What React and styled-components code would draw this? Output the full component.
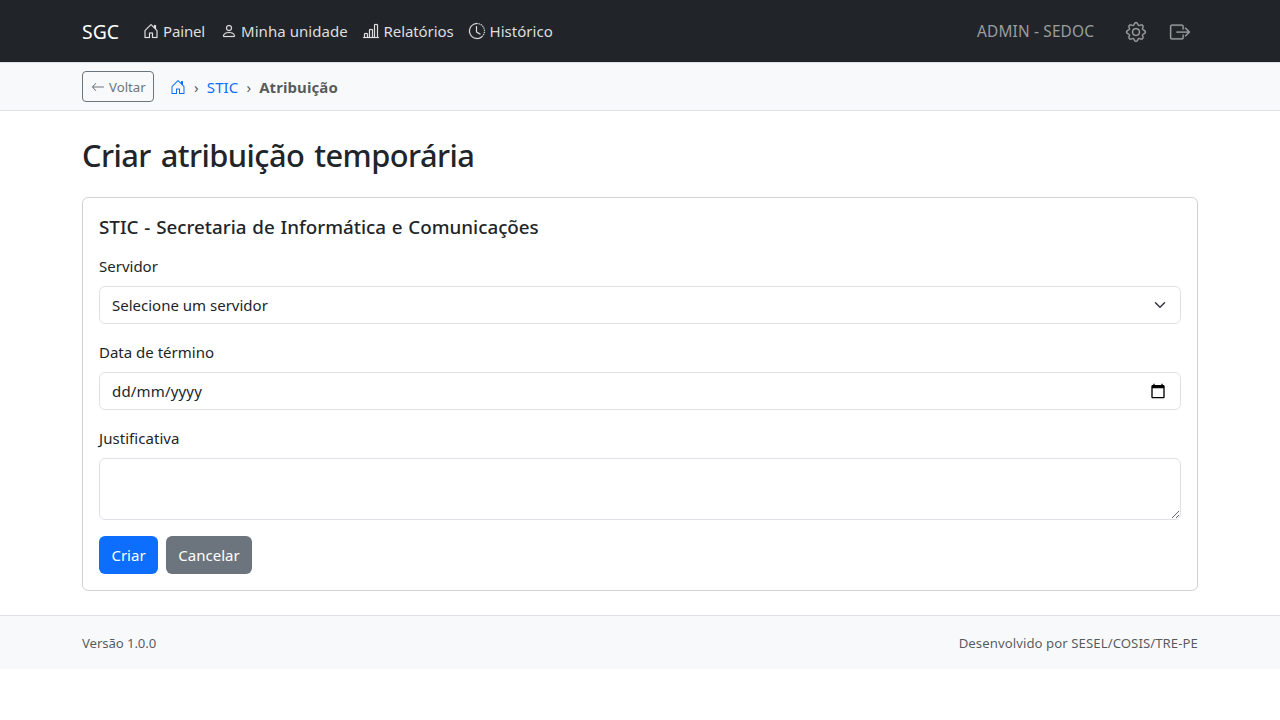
import React from "react";
import styled, { createGlobalStyle, css } from "styled-components";
import {
  BsHouseDoor, BsPerson, BsBarChartLine, BsClockHistory, BsGear, BsBoxArrowRight, BsArrowLeft,
} from "react-icons/bs";

const GlobalStyle = createGlobalStyle`
  *, *::before, *::after { box-sizing: border-box; }
  body {
    margin: 0;
    background: #fff;
    color: #212529;
    font-family: "Noto Sans", "Open Sans", sans-serif;
    font-size: 15px;
    line-height: 24px;
  }
  h2, h5, p { margin: 0; }
  input, select, textarea, button { font: inherit; color: inherit; }
  svg { display: block; flex: none; }
`;

const Container = styled.div`
  width: 1116px;
  margin: 0 auto;
  display: flex;
  align-items: center;
  justify-content: space-between;
`;

const Text = styled.span`
  white-space: nowrap;
  letter-spacing: ${({ $track = 0 }) => $track}px;
  word-spacing: ${({ $words = 0 }) => $words}px;
`;

const Navbar = styled.header`
  height: 62px;
  background: #212529;
  display: flex;
`;

const Brand = styled.a`
  color: #fff;
  font-size: 19.4px;
  line-height: 24px;
  padding-top: 2px;
  width: 60.5px;
`;

const NavGroup = styled.nav`
  display: flex;
  align-items: center;
`;

const NavLink = styled.a`
  display: flex;
  align-items: center;
  gap: 4.5px;
  width: ${({ $width }) => $width}px;
  color: #dedede;

  svg {
    stroke: currentColor;
    stroke-width: 0.2px;
    overflow: visible;
  }
`;

const UserArea = styled.div`
  display: flex;
  align-items: center;
  color: #9b9d9f;
  padding-right: 8px;
`;

const UserName = styled.div`
  width: 149px;
  font-size: 15.4px;
  padding-top: 2px;
`;

const IconLinks = styled.div`
  display: flex;
  gap: 24px;
  padding-top: 1px;

  svg {
    stroke: currentColor;
    stroke-width: 0.2px;
    overflow: visible;
  }
`;

const SubBar = styled.div`
  height: 49px;
  background: #f8f9fa;
  border: solid #dee2e6;
  border-width: 1px 0;
  display: flex;
`;

const BackButton = styled.button`
  display: flex;
  align-items: center;
  gap: 4px;
  width: 72px;
  height: 31px;
  padding: 0 8px;
  margin-right: 16px;
  border: 1px solid #6c757d;
  border-radius: 4px;
  background: transparent;
  color: #6c757d;
  font-size: 13.2px;
`;

const Crumbs = styled.div`
  display: flex;
  align-items: center;
  color: rgba(33, 37, 41, 0.75);
`;

const CrumbLink = styled.a`
  color: #0d6efd;
`;

const Separator = styled.span`
  width: 20.8px;
  text-align: center;
`;

const Main = styled.main`
  width: 1116px;
  margin: 0 auto;
  padding: 24px 0;
`;

const Title = styled.h2`
  font-size: 30.8px;
  line-height: 36.4px;
  padding-top: 2px;
  font-weight: 500;
  margin-bottom: 24px;
`;

const Card = styled.section`
  border: 1px solid rgba(0, 0, 0, 0.175);
  border-radius: 6px;
  padding: 16px;
`;

const CardTitle = styled.h5`
  font-size: 18.8px;
  line-height: 24px;
  padding-top: 1px;
  font-weight: 500;
  margin-bottom: 15px;
`;

const Field = styled.div`
  display: flex;
  flex-direction: column;
  gap: 8px;
  margin-bottom: 16px;
`;

const control = css`
  border: 1px solid #dee2e6;
  border-radius: 6px;
  background: #fff;
`;

const Control = styled.div`
  ${control}
  display: flex;
  align-items: center;
  justify-content: space-between;
  height: 38px;
  padding: 0 ${({ $end = 12 }) => $end}px 0 12px;
`;

const TextArea = styled.textarea`
  ${control}
  display: block;
  width: 100%;
  height: 62px;
  padding: 6px 12px;
  resize: vertical;
`;

const Actions = styled.div`
  display: flex;
  gap: 8px;
`;

const Button = styled.button`
  width: ${({ $width }) => $width}px;
  height: 38px;
  padding: 0;
  border: 0;
  border-radius: 6px;
  color: #fff;
  background: ${({ $variant }) => ($variant === "primary" ? "#0d6efd" : "#6c757d")};
`;

const Footer = styled.footer`
  height: 54px;
  border-top: 1px solid #dee2e6;
  background: #f8f9fa;
  color: rgba(33, 37, 41, 0.75);
  font-size: 13.2px;
  display: flex;
`;

const ChevronDown = () => (
  <svg width="16" height="12" viewBox="0 0 16 16" fill="none" stroke="#343a40" strokeWidth="2" strokeLinecap="round" strokeLinejoin="round">
    <path d="m2 5 6 6 6-6" />
  </svg>
);

const CalendarIcon = () => (
  <svg width="16" height="16" viewBox="0 0 24 24" fill="#000">
    <path d="M20 3h-1V1h-2v2H7V1H5v2H4c-1.1 0-2 .9-2 2v16c0 1.1.9 2 2 2h16c1.1 0 2-.9 2-2V5c0-1.1-.9-2-2-2zm0 18H4V8h16v13z" />
  </svg>
);

const NAV = [
  { label: "Painel", Icon: BsHouseDoor, width: 78, track: -0.15 },
  { label: "Minha unidade", Icon: BsPerson, width: 142.5, track: 0.05 },
  { label: "Relatórios", Icon: BsBarChartLine, width: 106, track: -0.08 },
  { label: "Histórico", Icon: BsClockHistory, width: 91, track: 0.03 },
];

export default function App() {
  return (
    <>
      <GlobalStyle />
      <Navbar>
        <Container>
          <NavGroup>
            <Brand><Text>SGC</Text></Brand>
            {NAV.map(({ label, Icon, width, track }) => (
              <NavLink key={label} $width={width}>
                <Icon size={16} />
                <Text $track={track}>{label}</Text>
              </NavLink>
            ))}
          </NavGroup>
          <UserArea>
            <UserName><Text $track={0.17}>ADMIN - SEDOC</Text></UserName>
            <IconLinks>
              <BsGear size={20} />
              <BsBoxArrowRight size={20} />
            </IconLinks>
          </UserArea>
        </Container>
      </Navbar>
      <SubBar>
        <Container>
          <NavGroup>
            <BackButton>
              <BsArrowLeft size={14} />
              <Text>Voltar</Text>
            </BackButton>
            <Crumbs>
              <CrumbLink><BsHouseDoor size={16} /></CrumbLink>
              <Separator>›</Separator>
              <CrumbLink><Text $track={0.1}>STIC</Text></CrumbLink>
              <Separator>›</Separator>
              <Text as="strong" $track={0.08}>Atribuição</Text>
            </Crumbs>
          </NavGroup>
        </Container>
      </SubBar>
      <Main>
        <Title><Text $track={-0.55} $words={2.5}>Criar atribuição temporária</Text></Title>
        <Card>
          <CardTitle><Text $words={0.95}>STIC - Secretaria de Informática e Comunicações</Text></CardTitle>
          <Field>
            <label><Text>Servidor</Text></label>
            <Control><Text>Selecione um servidor</Text><ChevronDown /></Control>
          </Field>
          <Field>
            <label><Text>Data de término</Text></label>
            <Control $end={14}><Text $track={0.17}>dd/mm/yyyy</Text><CalendarIcon /></Control>
          </Field>
          <Field>
            <label><Text $track={0.05}>Justificativa</Text></label>
            <TextArea />
          </Field>
          <Actions>
            <Button $variant="primary" $width={59}><Text>Criar</Text></Button>
            <Button $variant="secondary" $width={86}><Text>Cancelar</Text></Button>
          </Actions>
        </Card>
      </Main>
      <Footer>
        <Container>
          <Text $track={-0.1}>Versão 1.0.0</Text>
          <Text $track={0.06}>Desenvolvido por SESEL/COSIS/TRE-PE</Text>
        </Container>
      </Footer>
    </>
  );
}
